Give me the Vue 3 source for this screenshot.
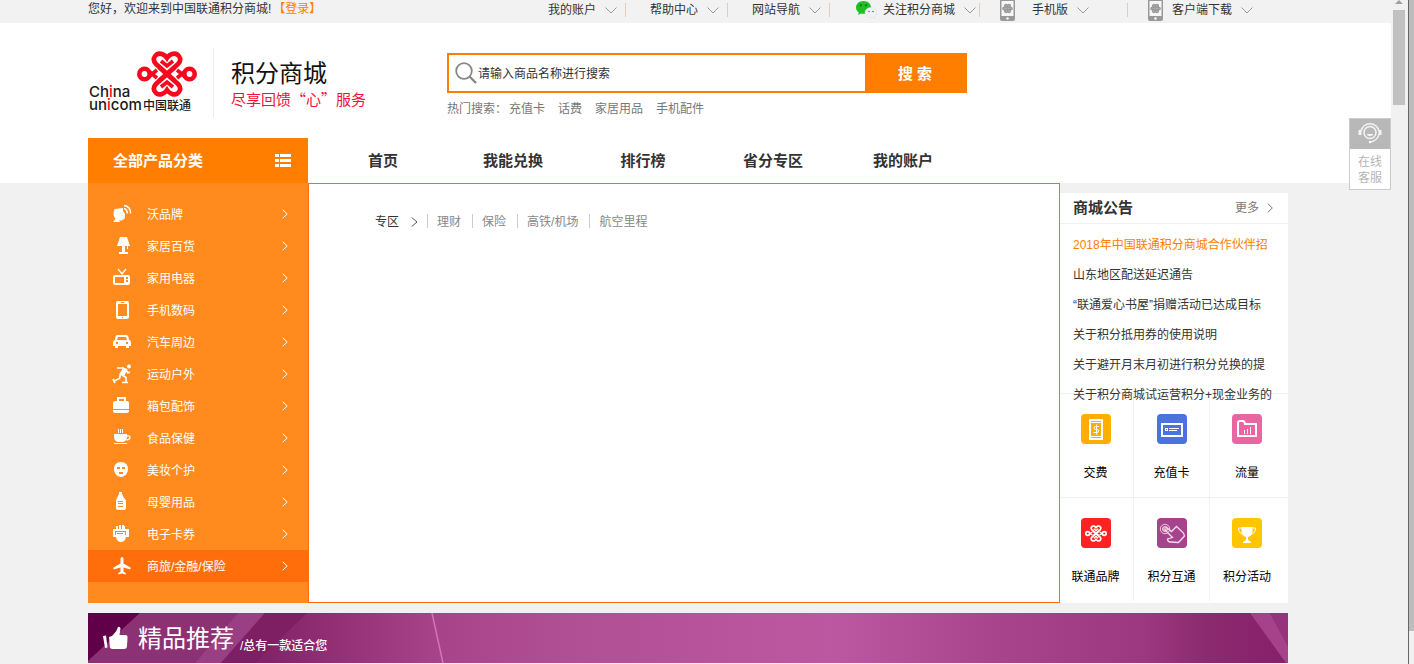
<script setup>
import { ref } from 'vue'

const keyword = ref('')

const topLinks = [
  { text: '我的账户', bar: true },
  { text: '帮助中心', bar: true },
  { text: '网站导航', bar: true },
  { text: '关注积分商城', icon: 'wechat', bar: true, cls: 'follow' },
  { text: '手机版', icon: 'phone', bar: true, cls: 'mobile' },
  { text: '客户端下载', icon: 'phone', cls: 'client' }
]
const hotWords = ['充值卡', '话费', '家居用品', '手机配件']
const navs = ['首页', '我能兑换', '排行榜', '省分专区', '我的账户']
const zones = ['理财', '保险', '高铁/机场', '航空里程']
const categories = [
  { text: '沃品牌', icon: 'dish' },
  { text: '家居百货', icon: 'lamp' },
  { text: '家用电器', icon: 'tv' },
  { text: '手机数码', icon: 'cell' },
  { text: '汽车周边', icon: 'car' },
  { text: '运动户外', icon: 'run' },
  { text: '箱包配饰', icon: 'bag' },
  { text: '食品保健', icon: 'cup' },
  { text: '美妆个护', icon: 'face' },
  { text: '母婴用品', icon: 'bottle' },
  { text: '电子卡券', icon: 'card' },
  { text: '商旅/金融/保险', icon: 'plane', active: true }
]
const notices = [
  '2018年中国联通积分商城合作伙伴招',
  '山东地区配送延迟通告',
  '“联通爱心书屋”捐赠活动已达成目标',
  '关于积分抵用券的使用说明',
  '关于避开月末月初进行积分兑换的提',
  '关于积分商城试运营积分+现金业务的'
]
const services = [
  { text: '交费', icon: 'pay' },
  { text: '充值卡', icon: 'recharge' },
  { text: '流量', icon: 'flow' },
  { text: '联通品牌', icon: 'brand' },
  { text: '积分互通', icon: 'swap' },
  { text: '积分活动', icon: 'cupwin' }
]
</script>

<template>
  <div class="frame">
    <svg class="defs" aria-hidden="true">
      <symbol id="knot" viewBox="0 0 60 46">
        <g fill="none" stroke="currentColor" stroke-width="4.6">
          <path d="M30 23 L19 13 C14 8 19 1 25 3 Q28 4 30 7 Q32 4 35 3 C41 1 46 8 41 13 Z" />
          <path d="M30 23 L19 33 C14 38 19 45 25 43 Q28 42 30 39 Q32 42 35 43 C41 45 46 38 41 33 Z" />
          <path d="M24 10 L30 15 L36 10 M24 36 L30 31 L36 36" stroke-width="3.6" />
          <circle cx="7.5" cy="23" r="5.2" />
          <circle cx="52.5" cy="23" r="5.2" />
          <path d="M11 19.500 L20 27 M11 26.500 L20 19 M49 19.500 L40 27 M49 26.500 L40 19" stroke-width="3.6" />
          <path d="M22 16 L38 30 M38 16 L22 30" />
        </g>
      </symbol>
    </svg>

    <div class="page">
      <div class="topbar">
        <div class="wrap topbar-in">
          <p class="hello">您好，欢迎来到中国联通积分商城!<a href="#">【登录】</a></p>
          <ul class="top-links">
            <li v-for="l in topLinks" :key="l.text" :class="l.cls">
              <svg v-if="l.icon === 'wechat'" class="wechat" width="21" height="18" viewBox="0 0 21 18">
                <path d="M7.500 0C3.300 0 0 2.800 0 6.400c0 2 1.100 3.800 2.700 4.900L2.200 14l2.700-1.500c.8.200 1.700.3 2.600.3 4.200 0 7.500-2.800 7.500-6.400S11.700 0 7.500 0z" fill="#1fbf1f" />
                <circle cx="4.800" cy="4.300" r="1.100" fill="#064" /><circle cx="10" cy="4.300" r="1.100" fill="#064" />
                <path d="M15 6.500c-3.400 0-6 2.300-6 5.100s2.600 5 6 5c.7 0 1.400-.1 2-.3l2.200 1.200-.5-1.900c1.400-.9 2.300-2.400 2.300-4 0-2.800-2.600-5.100-6-5.100z" fill="#f0f3f6" stroke="#d8dde0" stroke-width=".5" />
                <circle cx="13" cy="10.500" r=".8" fill="#667" /><circle cx="17" cy="10.500" r=".8" fill="#667" />
              </svg>
              <svg v-if="l.icon === 'phone'" class="phone" width="15" height="22" viewBox="0 0 15 22">
                <rect width="15" height="22" rx="2" fill="#999" />
                <rect x="1.500" y="2" width="12" height="15" fill="#f7f7f7" />
                <g fill="#bbb" stroke="#999" stroke-width="1.300"><circle cx="6" cy="7" r="1.500" /><circle cx="9" cy="7" r="1.500" /><circle cx="6" cy="12" r="1.500" /><circle cx="9" cy="12" r="1.500" /><circle cx="4" cy="9.500" r="1.200" /><circle cx="11" cy="9.500" r="1.200" /><path d="m5.500 7.500 4 4m0-4-4 4" /></g>
                <circle cx="7.500" cy="19.500" r="1.200" fill="#fff" />
              </svg>
              <a href="#">{{ l.text }}</a>
              <svg class="down" width="12" height="7" viewBox="0 0 12 7"><path d="M.5.500 6 6 11.500.500" fill="none" stroke="#999" /></svg>
              <i v-if="l.bar" class="bar"></i>
            </li>
          </ul>
        </div>
      </div>

      <header class="head">
        <div class="wrap head-in">
          <svg class="logo" width="112" height="64" viewBox="0 0 112 64">
            <svg x="49" y="1" width="60" height="46" viewBox="0 0 60 46" color="#f8081c"><use href="#knot" /></svg>
            <text class="latin" x="1" y="47">Ch<tspan fill="#f8081c">i</tspan>na</text>
            <text class="latin" x="1" y="60">un<tspan fill="#f8081c">i</tspan>com</text>
            <text class="han" x="55" y="60">中国联通</text>
          </svg>
          <div class="mall">
            <h1>积分商城</h1>
            <p>尽享回馈“心”服务</p>
          </div>
          <div class="search">
            <form class="search-box" @submit.prevent>
              <label class="field">
                <svg width="22" height="22" viewBox="0 0 22 22"><circle cx="9" cy="9" r="7.800" fill="none" stroke="#888" stroke-width="1.800" /><path d="M14.500 14.500 21 21" stroke="#888" stroke-width="2.400" /></svg>
                <input v-model="keyword" type="text" placeholder="请输入商品名称进行搜索" aria-label="请输入商品名称进行搜索" />
              </label>
              <button type="submit">搜 索</button>
            </form>
            <p class="hot"><span>热门搜索：</span><a v-for="h in hotWords" :key="h" href="#">{{ h }}</a></p>
          </div>
        </div>
        <div class="wrap nav">
          <h2 class="all">
            全部产品分类
            <svg width="16" height="13" viewBox="0 0 16 13" fill="#fff"><path d="M0 0h4v3H0zM5 0h11v3H5zM0 5h4v3H0zM5 5h11v3H5zM0 10h4v3H0zM5 10h11v3H5z" /></svg>
          </h2>
          <nav><a v-for="n in navs" :key="n" href="#">{{ n }}</a></nav>
        </div>
      </header>

      <main class="wrap body">
        <ul class="cats">
          <li v-for="c in categories" :key="c.text" :class="{ active: c.active }">
            <a href="#">
              <svg width="20" height="20" viewBox="0 0 20 20" fill="#fff" stroke="none">
                <template v-if="c.icon === 'dish'"><path d="M3 4.500 13 14c-2 3-6.500 3.500-9.200 1S.8 8.500 3 4.500z" /><path d="M5 13 1 18h7z" /><path d="m3 5 8-1v3l2 3v4z" /><path d="M12 4.500a4 4 0 0 1 3 5M12 1.500a7 7 0 0 1 6.500 8" fill="none" stroke="#fff" stroke-width="1.600" /></template>
                <template v-else-if="c.icon === 'lamp'"><path d="M8 1h7l3 9H5zM10 10h3v6h-3zM7 16h9v2H7zM15 10h1v3h-1z" /></template>
                <template v-else-if="c.icon === 'tv'"><path d="m6 1 4 5 4-5" fill="none" stroke="#fff" stroke-width="1.300" /><path fill-rule="evenodd" d="M3 7h13q2 0 2 2v6q0 2-2 2H3q-2 0-2-2V9q0-2 2-2zm0 2v6h9V9zm11 0v2h2V9zm0 3v2h2v-2z" /></template>
                <template v-else-if="c.icon === 'cell'"><path fill-rule="evenodd" d="M5 1h9q2 0 2 2v14q0 2-2 2H5q-2 0-2-2V3q0-2 2-2zm0 3v12h9V4zm3-2v1h3V2zm1 15v1h1v-1z" transform="translate(1 0)" /></template>
                <template v-else-if="c.icon === 'car'"><path fill-rule="evenodd" d="M5 3h9q2 0 2.500 2L17 8q2 0 2 3v3h-2v2h-3v-2H6v2H3v-2H1v-3q0-3 2-3l.5-3Q4 3 5 3zm1 2-1 3h10l-1-3zM4 10v2h2v-2zm10 0v2h2v-2z" /></template>
                <template v-else-if="c.icon === 'run'"><circle cx="17" cy="2.500" r="2" /><path d="M5 4h7M14 6l2 3 2-1M10 11l4 2.500V18M8.500 10.500l-1 4L2 17M1 15l2 4M10 18.500h6" fill="none" stroke="#fff" stroke-width="1.700" /><path d="m10 3.200 5.500 1.800L12 12.500 7 10.500 10.500 5z" /></template>
                <template v-else-if="c.icon === 'bag'"><path d="M6 5V2h7v3" fill="none" stroke="#fff" stroke-width="2" /><path d="M3 5h12q2 0 2 2v6H1V7q0-2 2-2zM1 14h16v1q0 2-2 2H3q-2 0-2-2z" /></template>
                <template v-else-if="c.icon === 'cup'"><path d="M6 1h1v4H6zM8 1h1v4H8zM10 1h1v4h-1zM2 6h13v3q0 4-4 5H6Q2 13 2 9zM2 15h13v1H2z" /><path d="M15 8q3-.8 3 1.500T14.500 12" fill="none" stroke="#fff" stroke-width="1.300" /></template>
                <template v-else-if="c.icon === 'face'"><path fill-rule="evenodd" d="M9 2C4.500 2 2 5 2 9s3 8 7 8 7-4 7-8-2.500-7-7-7zM5 7h3v2H5zm5 0h3v2h-3zM7 12h4v2H7z" /></template>
                <template v-else-if="c.icon === 'bottle'"><path fill-rule="evenodd" d="M7 0h3v2l2 4q2 1 2 4v6q0 2-2 2H6q-2 0-2-2v-6q0-3 1-4l2-4zM6 9v1h5V9zm0 2v1h5v-1zm0 3v1h5v-1z" /></template>
                <template v-else-if="c.icon === 'card'"><path d="M4 2h2v3H4zM7 1h2v4H7zM10 1h2v4h-2zM12 2h1v3h-1z" /><path fill-rule="evenodd" d="M1 5h16v8h-3q-1 5-5 5t-5-5H1zm2 2v4h1V8h10V7zm10 1v3h1V8zM5 9v1h6V9z" /></template>
                <template v-else><path d="M10 1c1 0 1.500 1 1.500 2v4.500l7 4v2l-7-2v4l2.500 2V18.500l-4-1-4 1V17.500l2.500-2v-4l-7 2v-2l7-4V3C8.500 2 9 1 10 1z" /></template>
              </svg>
              <span>{{ c.text }}</span>
              <svg class="go" width="6" height="10" viewBox="0 0 6 10"><path d="M.7.700 5.200 5 .700 9.300" fill="none" stroke="#fff" /></svg>
            </a>
          </li>
        </ul>

        <section class="panel">
          <h3>专区<svg width="7" height="10" viewBox="0 0 7 10"><path d="M.7.500 6 5 .700 9.500" fill="none" stroke="#555" /></svg></h3>
          <a v-for="z in zones" :key="z" href="#">{{ z }}</a>
        </section>

        <aside class="side">
          <div class="side-head">
            <h3>商城公告</h3>
            <a href="#">更多<svg width="6" height="10" viewBox="0 0 6 10"><path d="M.7.500 5.300 5 .700 9.500" fill="none" stroke="#777" /></svg></a>
          </div>
          <ul class="news">
            <li v-for="n in notices" :key="n"><a href="#">{{ n }}</a></li>
          </ul>
          <div class="services">
            <a v-for="s in services" :key="s.text" href="#">
              <svg width="30" height="30" viewBox="0 0 30 30" fill="none" stroke="#fff">
                <template v-if="s.icon === 'pay'"><rect width="30" height="30" rx="4" fill="#ffae00" stroke="none" /><rect x="9" y="6" width="12" height="19" stroke-width="2" /><path d="M9 8.500h12M9 22.500h12" /><path d="M18 12.500h-3.500q-1.500 0-1.500 1.500t1.500 1.500H16q1.500 0 1.500 1.500T16 18.500h-3.500M15.500 10.500v10" /></template>
                <template v-else-if="s.icon === 'recharge'"><rect width="30" height="30" rx="4" fill="#4a73df" stroke="none" /><rect x="5" y="10" width="20" height="12" stroke-width="2" /><rect x="8.500" y="14.500" width="2" height="2" /><path d="M12 14.500h10M12 16.500h8" /></template>
                <template v-else-if="s.icon === 'flow'"><rect width="30" height="30" rx="4" fill="#e966a2" stroke="none" /><path d="M6 22V9q0-2 2-2h3q1.500 0 2 3h11v12z" stroke-width="2" /><path d="M12.500 20v-4M15.500 20v-5M18.500 20v-7" /></template>
                <template v-else-if="s.icon === 'brand'"><rect width="30" height="30" rx="4" fill="#ff2222" stroke="none" /><svg x="4" y="7" width="22" height="17" viewBox="0 0 60 46" color="#fff"><use href="#knot" /></svg></template>
                <template v-else-if="s.icon === 'swap'"><rect width="30" height="30" rx="4" fill="#a5438c" stroke="none" /><circle cx="8" cy="11" r="4.700" stroke="#ecd" /><circle cx="8" cy="11" r="2.500" fill="#d9a" stroke="#ecd" /><path d="m7.500 11.500 8 8-5 1.500q0 3 3 3l8 .5 6-6.500-1-3-7-6.500-5 5-5.500-4.500" stroke="#f5dced" stroke-width="1.300" /></template>
                <template v-else><rect width="30" height="30" rx="4" fill="#ffc600" stroke="none" /><path d="M9.500 9h11v4q0 5-4.500 6v3l3 2v1h-8v-1l3-2v-3q-4.500-1-4.500-6z" fill="#fff" stroke="none" /><path d="M10 10H6.500q0 6 5 6M20 10h3.500q0 6-5 6" /></template>
              </svg>
              <span>{{ s.text }}</span>
            </a>
          </div>
        </aside>
      </main>

      <section class="wrap banner">
        <svg class="bg" viewBox="0 0 1200 50" preserveAspectRatio="none" aria-hidden="true">
          <defs>
            <linearGradient id="base"><stop offset="0" stop-color="#822668" /><stop offset=".15" stop-color="#852368" /><stop offset=".29" stop-color="#a74489" /><stop offset=".4" stop-color="#b14f95" /><stop offset=".62" stop-color="#bb58a1" /><stop offset=".75" stop-color="#a8458d" /><stop offset=".88" stop-color="#9c3880" /><stop offset=".93" stop-color="#8c2b70" /><stop offset="1" stop-color="#851f6a" /></linearGradient>
          </defs>
          <rect width="1200" height="50" fill="url(#base)" />
          <path d="M0 0h52L0 48z" fill="#610049" />
          <path d="M52 0h98L107 50H0v-2z" fill="#8d3175" />
          <path d="M150 0h27l-44 50h-26z" fill="#9a3f83" />
          <path d="M177 0h42l-52 50h-34z" fill="#7e1f63" />
          <path d="m344 0 11 50" stroke="#d076b6" stroke-width="1.500" />
          <path d="m1162 0 36 50h2V33L1182 0z" fill="#a54289" />
          <path d="M1182 0h18v33z" fill="#95347c" />
        </svg>
        <svg class="thumb-up" width="25" height="25" viewBox="0 0 25 25" fill="#fff"><path d="m0 10 3-.500 1.500 12L2 22zM6 11l3-1 4-4.500L15 1q2-1 2.500 1.500l-1 6.500H23q2 .500 1.500 3l-.5 8q0 3-3 3H9l-2-1z" /></svg>
        <h2>精品推荐</h2>
        <p>/总有一款适合您</p>
      </section>

      <a class="service" href="#">
        <span class="face">
          <svg width="24" height="22" viewBox="0 0 24 22" fill="none" stroke="#f4f4f4"><circle cx="12" cy="10.500" r="6" stroke-width="1.500" /><path d="M3 9a9.200 9.200 0 0 1 18 0M21 12q-1 6-8 8" stroke-width="1.500" /><path d="M2 8v5M22 8v5" stroke-width="3" /><path d="M9 12.500q3 2.500 6 0z" fill="#fff" /><circle cx="12" cy="20" r="1.200" fill="#fff" stroke="none" /></svg>
        </span>
        <span class="words">在线<br />客服</span>
      </a>
    </div>

    <div class="scroll" aria-hidden="true"><i class="up"></i><i class="grip"></i></div>
    <div class="outer" aria-hidden="true"><i></i></div>
  </div>
</template>

<style>
body {
  background: #f1f1f1;
}
</style>

<style scoped>
* {
  box-sizing: border-box;
}
.frame {
  display: flex;
  min-height: 100vh;
  font: 12px/18px "Liberation Sans", "Noto Sans CJK SC", sans-serif;
  color: #333;
  background: #f1f1f1;
}
.defs {
  position: absolute;
  width: 0;
  height: 0;
}
.frame svg {
  flex: none;
}
ul, p, h1, h2, h3 {
  margin: 0;
  padding: 0;
  list-style: none;
}
a {
  color: inherit;
  text-decoration: none;
  white-space: nowrap;
}
.page {
  position: relative;
  flex: 1;
  min-width: 0;
}
.topbar, .head {
  padding-right: 15px;
}
.wrap {
  max-width: 1200px;
  margin: 0 auto;
}
.topbar {
  height: 23px;
  background: #f2f2f2;
}
.topbar-in {
  display: flex;
  justify-content: space-between;
}
.hello {
  line-height: 18px;
}
.hello a {
  margin-left: 2px;
  color: #ff7e00;
}
.top-links {
  display: flex;
  padding-right: 35px;
}
.top-links li {
  display: flex;
  align-items: center;
  height: 20px;
  margin-left: 24px;
}
.down {
  margin-left: 9px;
}
.bar {
  width: 1px;
  height: 14px;
  margin-left: 8px;
  background: #e2cdbc;
}
.wechat {
  margin-right: 6px;
}
.phone {
  margin-right: 9px;
}
.top-links .follow {
  margin-left: 26px;
}
.follow .bar {
  margin-left: 3px;
}
.top-links .mobile, .top-links .client {
  margin-left: 20px;
}
.mobile .phone {
  margin-right: 17px;
}
.mobile .bar {
  margin-left: 38px;
}
.head {
  background: #fff;
}
.head-in {
  display: flex;
  height: 115px;
}
.logo {
  margin-top: 27px;
}
.latin {
  font: 500 15px Inter, sans-serif;
  fill: #1a1a1a;
}
.han {
  font: 500 12px "Noto Sans CJK SC", sans-serif;
  fill: #1a1a1a;
}
.mall {
  width: 234px;
  height: 70px;
  margin: 25px 0 0 13px;
  padding: 8px 0 0 17px;
  border-left: 1px solid #eee;
  font-family: "Noto Sans CJK SC", sans-serif;
}
.mall h1 {
  font-size: 24px;
  font-weight: 400;
  line-height: 32px;
  color: #111;
}
.mall p {
  font-size: 15px;
  line-height: 22px;
  color: #f5103a;
}
.search {
  width: 520px;
  margin-top: 30px;
}
.search-box {
  display: flex;
  height: 40px;
  border: 2px solid #ff7e00;
  background: #fff;
}
.field {
  display: flex;
  flex: 1;
  align-items: center;
  padding-left: 6px;
}
.field input {
  flex: 1;
  padding: 2px 0 0 1px;
  border: 0;
  outline: 0;
  font: inherit;
  background: none;
}
.field input::placeholder {
  color: #333;
  opacity: 1;
}
.search-box button {
  width: 100px;
  padding: 0 0 2px;
  border: 0;
  font: 700 15px "Liberation Sans", "Noto Sans CJK SC", sans-serif;
  color: #fff;
  background: #ff7e00;
}
.hot {
  margin-top: 7px;
  color: #777;
}
.hot span {
  margin-right: 2px;
}
.hot a {
  margin-right: 13px;
}
.nav {
  display: flex;
  height: 45px;
}
.all {
  display: flex;
  align-items: center;
  justify-content: space-between;
  width: 220px;
  padding: 0 17px 0 25px;
  font-size: 15px;
  color: #fff;
  background: #ff7e00;
}
.nav nav {
  display: flex;
  margin-left: 10px;
}
.nav nav a {
  width: 130px;
  font-size: 15px;
  font-weight: 700;
  line-height: 45px;
  text-align: center;
}
.body {
  display: flex;
}
.page > .wrap {
  width: calc(100% - 15px);
  margin-left: max(0px, calc((100% - 1215px) / 2));
}
.cats {
  width: 220px;
  padding: 15px 0 21px;
  background: #ff8a1e;
}
.cats a {
  display: flex;
  align-items: center;
  height: 32px;
  padding: 0 20px 0 24px;
  color: #fff;
}
.cats span {
  flex: 1;
  margin-left: 15px;
  padding-top: 2px;
}
.cats .active {
  background: #ff6e0b;
}
.panel {
  display: flex;
  flex: 1;
  align-items: flex-start;
  padding: 30px 0 0 66px;
  border: 1px solid #ff6e0b;
  background: #fff;
}
.panel h3 {
  display: flex;
  align-items: center;
  margin-right: 9px;
  font-size: 12px;
  font-weight: 400;
  line-height: 16px;
}
.panel h3 svg {
  margin-left: 12px;
}
.panel a {
  height: 14px;
  padding: 0 11px 0 9px;
  border-left: 1px solid #ccc;
  line-height: 16px;
  color: #888;
}
.side {
  width: 228px;
  margin-top: 10px;
  background: #fff;
}
.side-head {
  display: flex;
  align-items: center;
  justify-content: space-between;
  height: 31px;
  padding: 0 15px 0 13px;
  border-bottom: 1px solid #f1f1f1;
}
.side-head h3 {
  font-size: 15px;
}
.side-head a {
  display: flex;
  align-items: center;
  color: #777;
}
.side-head svg {
  margin-left: 8px;
}
.news {
  position: relative;
  height: 169px;
  padding: 6px 0 0 13px;
}
.news li {
  line-height: 30px;
}
.news li:first-child {
  color: #ff7e00;
}
.services {
  display: grid;
  grid-template-columns: 74px 76px 1fr;
}
.services a {
  display: flex;
  flex-direction: column;
  align-items: center;
  gap: 20px;
  height: 104px;
  padding: 20px 0 0;
  border-top: 1px solid #f1f1f1;
  border-right: 1px solid #f1f1f1;
  color: #000;
}
.services a:nth-child(3n + 1) {
  padding-right: 2px;
}
.services a:nth-child(3n) {
  padding-right: 4px;
  border-right: 0;
}
.banner {
  position: relative;
  display: flex;
  align-items: center;
  height: 50px;
  margin-top: 10px;
  padding-left: 15px;
  overflow: hidden;
  color: #fff;
}
.banner .bg {
  position: absolute;
  inset: 0;
  width: 100%;
  height: 100%;
}
.banner .thumb-up, .banner h2, .banner p {
  position: relative;
}
.banner h2 {
  margin-left: 10px;
  padding-top: 2px;
  font-size: 24px;
  font-weight: 400;
  line-height: 50px;
}
.banner p {
  margin-left: 6px;
  padding-top: 15px;
  font-weight: 500;
}
.service {
  position: absolute;
  top: 118px;
  right: 0;
  width: 42px;
  border: 1px solid #ccc;
  line-height: 16px;
  text-align: center;
  color: #b5b5b5;
  background: #fff;
}
.face {
  display: flex;
  align-items: center;
  justify-content: center;
  height: 30px;
  padding-bottom: 2px;
  background: #b8b8b8;
}
.words {
  display: block;
  padding: 5px 0 3px;
}
.scroll {
  width: 17px;
  padding: 0 3px 0 2px;
  background: #f1f1f1;
}
.up {
  display: block;
  width: 8px;
  height: 4px;
  margin: 0 auto 6px;
  background: #a0a0a0;
  clip-path: polygon(50% 0, 100% 100%, 0 100%);
}
.grip {
  display: block;
  height: 95px;
  background: #c1c1c1;
}
.outer {
  width: 6px;
  border-left: 1px solid #666;
  background: #f1f1f1;
}
.outer i {
  display: block;
  height: 95%;
  background: #bdbdbd;
}
</style>
